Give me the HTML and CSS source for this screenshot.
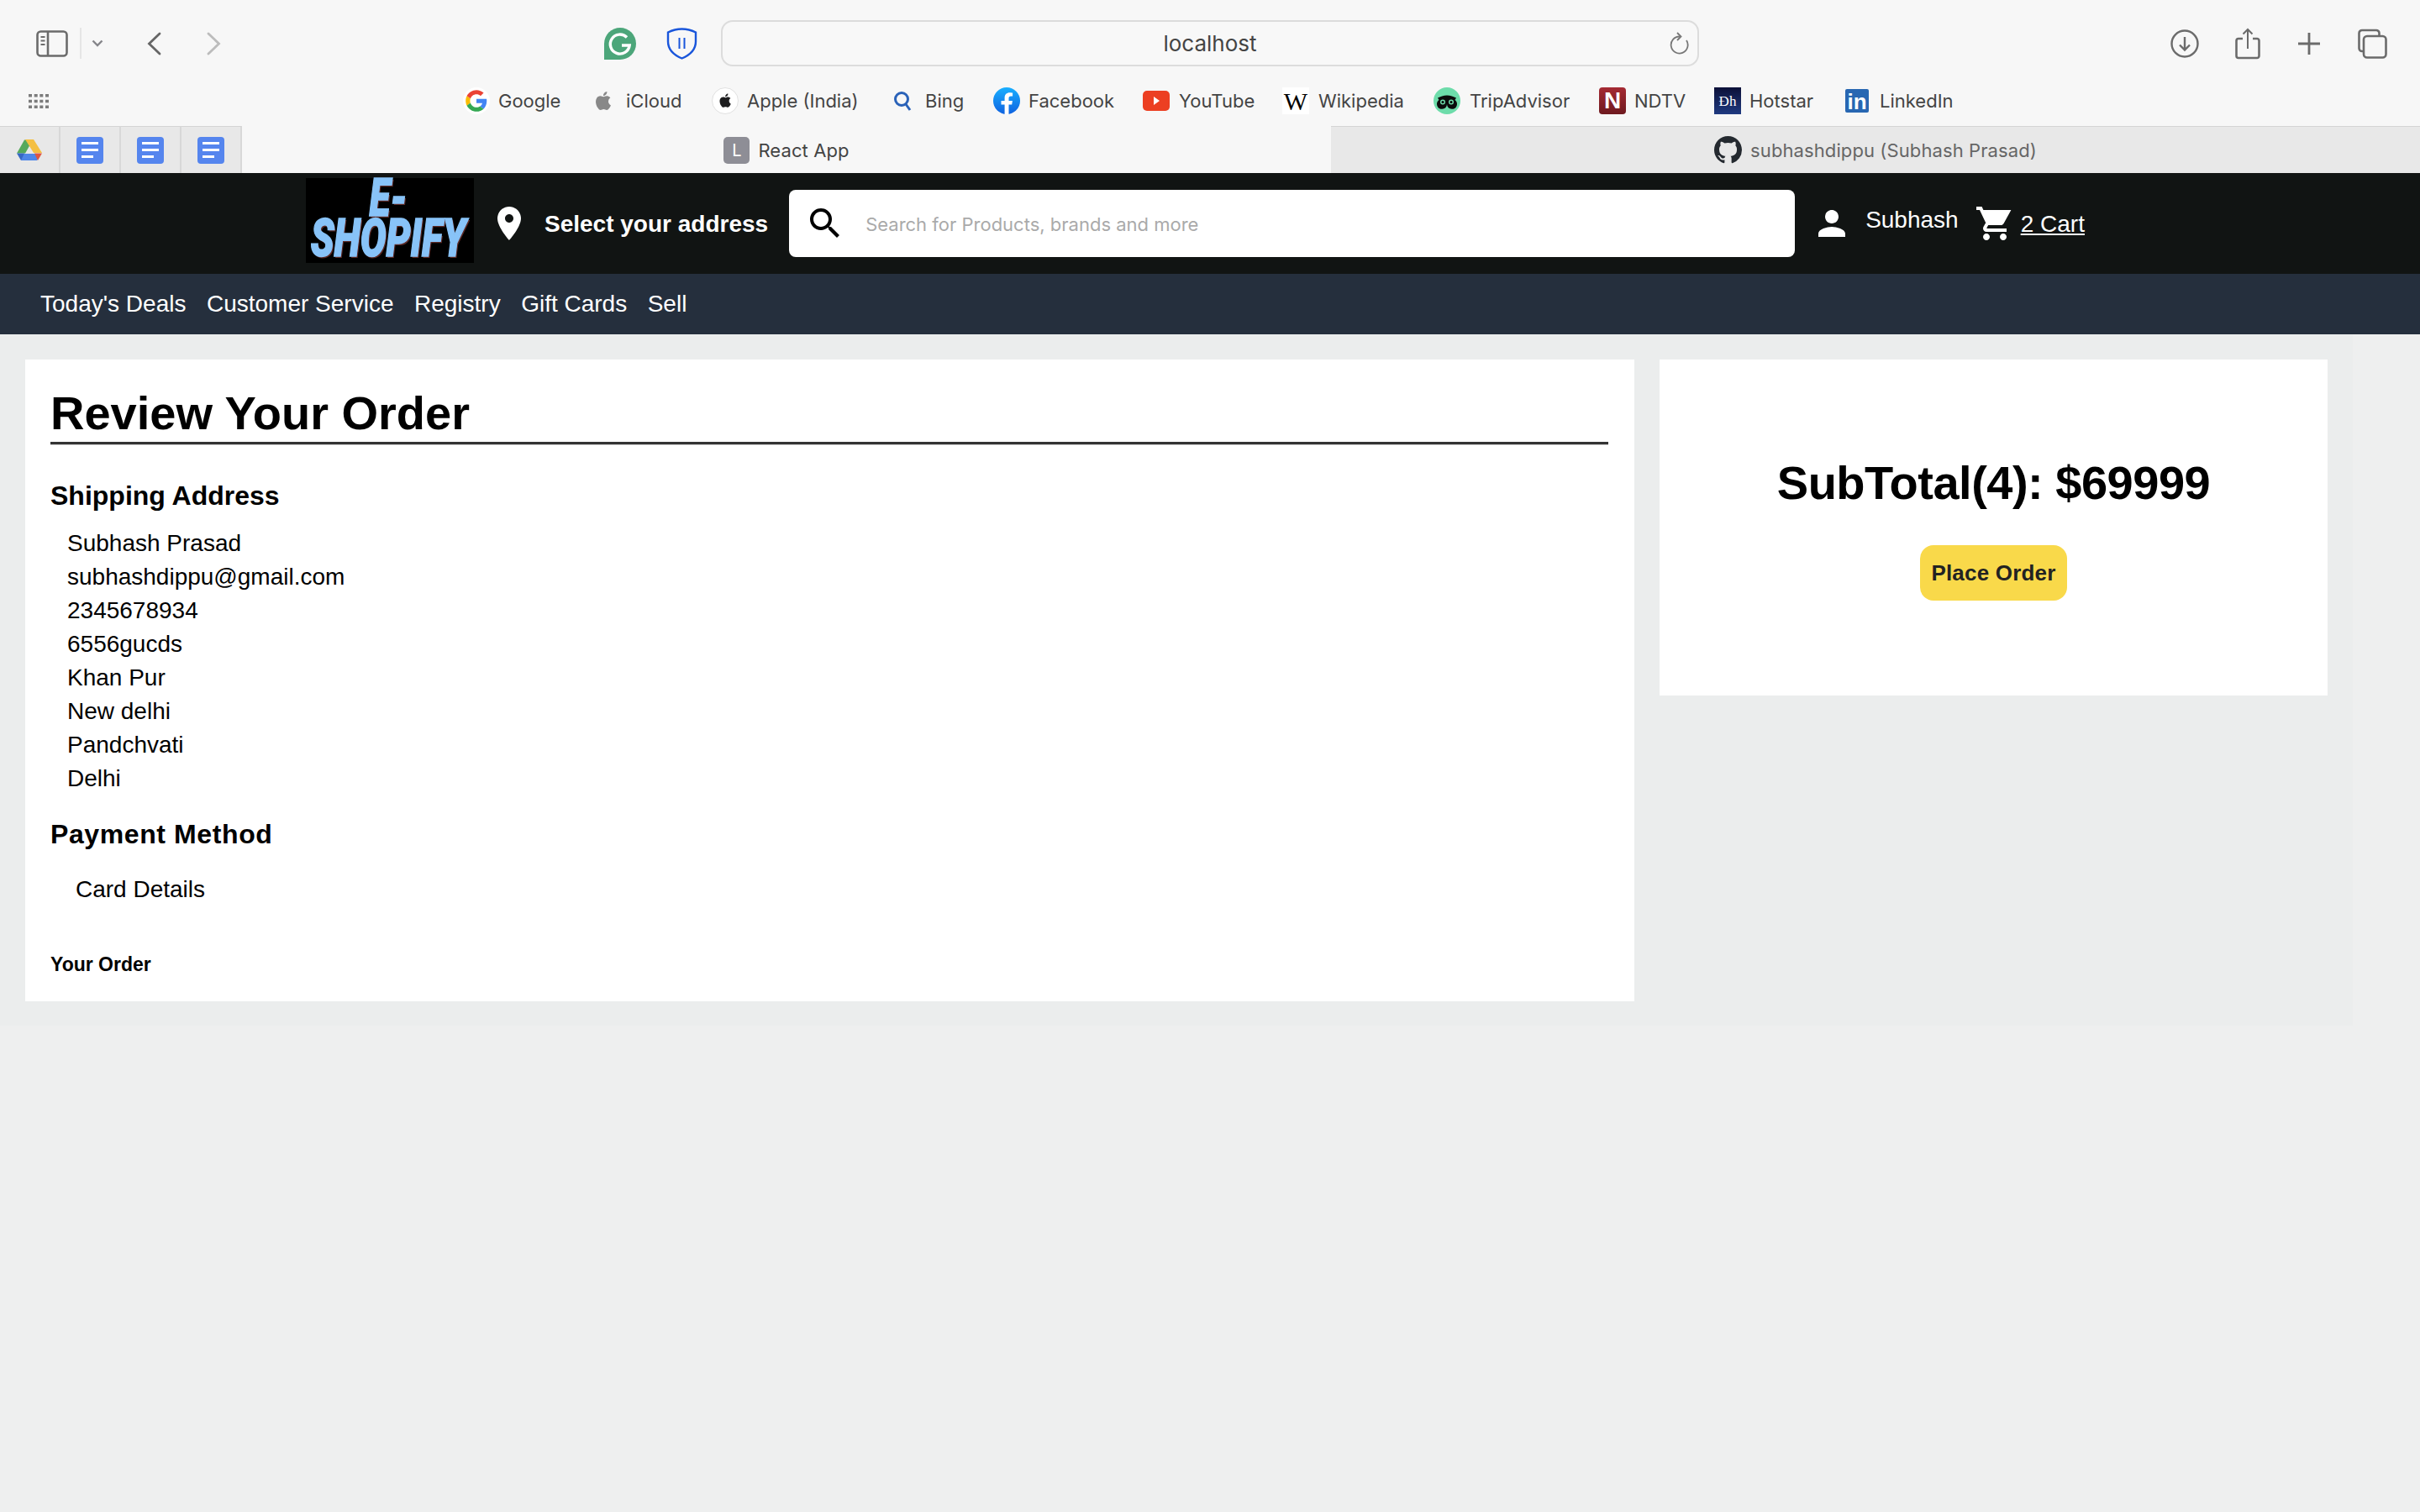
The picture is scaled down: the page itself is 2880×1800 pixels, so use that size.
FILE: index.html
```html
<!DOCTYPE html>
<html lang="en">
<head>
    <meta charset="UTF-8">
    <meta name="viewport" content="width=device-width, initial-scale=1.0">
    <title>React App</title>
    <link rel="stylesheet" href="styles.css">
</head>
<body>
    <div class="browser">
        <div class="toolbar">
            <svg class="tb-sidebar" width="38" height="32" viewBox="0 0 38 32" fill="none" stroke="#6b6b6b" stroke-width="2.6"><rect x="1.5" y="1.5" width="35" height="29" rx="4"/><path d="M14 2v28"/><path d="M5.5 8h5M5.5 12.5h5M5.5 17h5" stroke-width="1.8"/></svg>
            <span class="tb-divider"></span>
            <svg class="tb-chevron" width="14" height="9" viewBox="0 0 14 9" fill="none" stroke="#85858a" stroke-width="2.4"><path d="M1.5 1.5 7 7l5.5-5.5"/></svg>
            <svg class="tb-back" width="17" height="28" viewBox="0 0 17 28" fill="none" stroke="#666" stroke-width="2.8" stroke-linecap="round"><path d="M15 2 2.5 14 15 26"/></svg>
            <svg class="tb-forward" width="17" height="28" viewBox="0 0 17 28" fill="none" stroke="#bcbcbc" stroke-width="2.8" stroke-linecap="round"><path d="M2 2l12.5 12L2 26"/></svg>
            <svg class="tb-grammarly" width="38" height="38" viewBox="0 0 38 38"><path d="M0 19a19 19 0 1 1 19 19H0z" fill="#4ca67a"/><path d="M27 11.5A11.5 11.5 0 1 0 30.2 21H21" fill="none" stroke="#fff" stroke-width="3.4"/></svg>
            <svg class="tb-shield" width="37" height="38" viewBox="0 0 37 38" fill="none" stroke="#1a56db"><path d="M18.5 1.500c6 0 11.500 1.500 16.500 4v11c0 9-7 16-16.500 20C9 32.500 2 25.500 2 16.500v-11c5-2.500 10.500-4 16.500-4z" stroke-width="2.4"/><path d="M15.500 12v13M21.500 12v13" stroke-width="2"/></svg>
            <div class="address-bar">
                <span class="address-text">localhost</span>
                <svg class="reload-icon" width="24" height="28" viewBox="0 0 24 28" fill="none" stroke="#777" stroke-width="1.8"><path d="M13 5.500A10 10 0 1 0 21 10"/><path d="M10 1l4.500 4.500L10 10"/></svg>
            </div>
            <svg class="tb-download" width="34" height="34" viewBox="0 0 34 34" fill="none" stroke="#6b6b6b" stroke-width="2.4"><circle cx="17" cy="17" r="15.500"/><path d="M17 9v15M11 18.500l6 6 6-6"/></svg>
            <svg class="tb-share" width="30" height="38" viewBox="0 0 30 38" fill="none" stroke="#6b6b6b" stroke-width="2.6"><path d="M9 13H4a2.500 2.500 0 0 0-2.500 2.500v18A2.500 2.500 0 0 0 4 36h22a2.500 2.500 0 0 0 2.500-2.500v-18A2.500 2.500 0 0 0 26 13h-5"/><path d="M15 25V2M9.500 7.500 15 2l5.500 5.500" stroke-width="2"/></svg>
            <svg class="tb-plus" width="28" height="28" viewBox="0 0 28 28" fill="none" stroke="#6b6b6b" stroke-width="2.8"><path d="M14 1v26M1 14h26"/></svg>
            <svg class="tb-tabs" width="35" height="36" viewBox="0 0 35 36" fill="none" stroke="#6b6b6b" stroke-width="2.6"><path d="M6 27H5a3.500 3.500 0 0 1-3.500-3.500v-18A3.500 3.500 0 0 1 5 2h17a3.500 3.500 0 0 1 3.500 3.500V8"/><rect x="7" y="9" width="26.500" height="25.500" rx="4"/></svg>
        </div>

        <div class="bookmarks">
            <svg class="grid-icon" width="24" height="17" viewBox="0 0 24 17" fill="#7c7c7c"><path d="M0 0h4v3.400H0zM6.700 0h4v3.400h-4zM13.300 0h4v3.400h-4zM20 0h4v3.400h-4zM0 6.800h4v3.400H0zM6.700 6.800h4v3.400h-4zM13.300 6.800h4v3.400h-4zM20 6.800h4v3.400h-4zM0 13.600h4V17H0zM6.700 13.600h4V17h-4zM13.300 13.600h4V17h-4zM20 13.600h4V17h-4z"/></svg>
            <div class="bookmark-list">
                <a class="bookmark">
                    <svg class="favicon" viewBox="-6 -6 60 60"><circle cx="24" cy="24" r="30" fill="#fff"/><path fill="#EA4335" d="M24 9.500c3.540 0 6.710 1.220 9.210 3.600l6.850-6.850C35.900 2.380 30.470 0 24 0 14.620 0 6.510 5.380 2.560 13.220l7.980 6.190C12.430 13.720 17.740 9.500 24 9.500z"/><path fill="#4285F4" d="M46.980 24.550c0-1.570-.15-3.090-.38-4.550H24v9.020h12.940c-.58 2.960-2.260 5.480-4.780 7.180l7.730 6c4.510-4.180 7.090-10.360 7.090-17.650z"/><path fill="#FBBC05" d="M10.530 28.590c-.48-1.450-.76-2.990-.76-4.590s.27-3.140.76-4.590l-7.980-6.190C.92 16.460 0 20.120 0 24c0 3.880.92 7.540 2.560 10.780l7.970-6.190z"/><path fill="#34A853" d="M24 48c6.480 0 11.930-2.130 15.890-5.810l-7.730-6c-2.150 1.450-4.920 2.300-8.160 2.300-6.260 0-11.570-4.220-13.470-9.910l-7.980 6.190C6.510 42.620 14.620 48 24 48z"/></svg>
                    Google
                </a>
                <a class="bookmark">
                    <svg class="favicon favicon-narrow" viewBox="0 0 24 24" fill="#888"><path d="M12.152 6.896c-.948 0-2.415-1.078-3.960-1.040-2.040.027-3.910 1.183-4.961 3.014-2.117 3.675-.546 9.103 1.519 12.090 1.013 1.454 2.208 3.090 3.792 3.039 1.520-.065 2.090-.987 3.935-.987 1.831 0 2.350.987 3.960.948 1.637-.026 2.676-1.480 3.676-2.948 1.156-1.688 1.636-3.325 1.662-3.415-.039-.013-3.182-1.221-3.220-4.857-.026-3.040 2.480-4.494 2.597-4.559-1.429-2.090-3.623-2.324-4.390-2.376-2-.156-3.675 1.090-4.610 1.090zM15.530 3.830c.843-1.012 1.400-2.427 1.245-3.830-1.207.052-2.662.805-3.532 1.818-.780.896-1.454 2.338-1.273 3.714 1.338.104 2.715-.688 3.559-1.701"/></svg>
                    iCloud
                </a>
                <a class="bookmark">
                    <svg class="favicon" viewBox="0 0 32 32"><circle cx="16" cy="16" r="15.500" fill="#fff" stroke="#e0e0e0"/><g transform="translate(8 7.500) scale(.68)" fill="#1d1d1f"><path d="M12.152 6.896c-.948 0-2.415-1.078-3.960-1.040-2.040.027-3.910 1.183-4.961 3.014-2.117 3.675-.546 9.103 1.519 12.090 1.013 1.454 2.208 3.090 3.792 3.039 1.520-.065 2.090-.987 3.935-.987 1.831 0 2.350.987 3.960.948 1.637-.026 2.676-1.480 3.676-2.948 1.156-1.688 1.636-3.325 1.662-3.415-.039-.013-3.182-1.221-3.220-4.857-.026-3.040 2.480-4.494 2.597-4.559-1.429-2.090-3.623-2.324-4.390-2.376-2-.156-3.675 1.090-4.610 1.090zM15.530 3.830c.843-1.012 1.400-2.427 1.245-3.830-1.207.052-2.662.805-3.532 1.818-.780.896-1.454 2.338-1.273 3.714 1.338.104 2.715-.688 3.559-1.701"/></g></svg>
                    Apple (India)
                </a>
                <a class="bookmark">
                    <svg class="favicon favicon-narrow" viewBox="0 0 22 24" fill="none" stroke="#2a62b8" stroke-width="3"><circle cx="10" cy="10" r="7.500"/><path d="M15 16l5 7"/></svg>
                    Bing
                </a>
                <a class="bookmark">
                    <svg class="favicon" viewBox="0 0 32 32"><defs><linearGradient id="fb" x1="0" y1="0" x2="0" y2="1"><stop offset="0" stop-color="#19afff"/><stop offset="1" stop-color="#0f62e0"/></linearGradient></defs><circle cx="16" cy="16" r="16" fill="url(#fb)"/><path d="M22.200 20.600l.7-4.600h-4.400v-3c0-1.300.6-2.500 2.600-2.500h2V6.600s-1.800-.3-3.500-.3c-3.600 0-6 2.200-6 6.200V16H9.500v4.600h4.100V32h4.900V20.600z" fill="#fff"/></svg>
                    Facebook
                </a>
                <a class="bookmark">
                    <svg class="favicon" viewBox="0 0 32 32"><rect y="4" width="32" height="24" rx="5" fill="#ec3f22"/><path d="M13 11l7 5-7 5z" fill="#fff"/></svg>
                    YouTube
                </a>
                <a class="bookmark">
                    <span class="favicon wiki-icon">W</span>
                    Wikipedia
                </a>
                <a class="bookmark">
                    <svg class="favicon" viewBox="0 0 32 32"><circle cx="16" cy="16" r="16" fill="#6ddcaa"/><path d="M5 12.500c3-1.500 7-3 11-3s8 1.500 11 3c-.5 1-1 1.500-1.500 2.500A6 6 0 1 1 16 20a6 6 0 1 1-9.500-5C6 14 5.500 13.500 5 12.500z" fill="#0b0b0b"/><circle cx="11" cy="17.500" r="3" fill="#6ddcaa"/><circle cx="21" cy="17.500" r="3" fill="#6ddcaa"/><circle cx="11" cy="17.500" r="1.500"/><circle cx="21" cy="17.500" r="1.500"/></svg>
                    TripAdvisor
                </a>
                <a class="bookmark">
                    <span class="favicon ndtv-icon">N</span>
                    NDTV
                </a>
                <a class="bookmark">
                    <span class="favicon hotstar-icon">Ðh</span>
                    Hotstar
                </a>
                <a class="bookmark">
                    <span class="favicon linkedin-icon">in</span>
                    LinkedIn
                </a>
            </div>
        </div>

        <div class="tabbar">
            <div class="pinned-tab">
                <svg width="30" height="27" viewBox="0 0 30 27"><path d="M10 1h10L11 17H1z" fill="#55a95c" transform="translate(-1 .5)"/><path d="M10 1h10l10 16H20z" fill="#f4bf42"/><path d="M6 18h23l-5 8H5z" fill="#4f86e8"/><path d="M0 17.500h9L5 26z" fill="#3768c4"/><path d="M21 17.500h9L25 26z" fill="#df5640"/></svg>
            </div>
            <div class="pinned-tab"><span class="docs-icon"><i></i><i></i><i class="short"></i></span></div>
            <div class="pinned-tab"><span class="docs-icon"><i></i><i></i><i class="short"></i></span></div>
            <div class="pinned-tab"><span class="docs-icon"><i></i><i></i><i class="short"></i></span></div>
            <div class="tab tab-active"><span class="letter-icon">L</span>React App</div>
            <div class="tab">
                <svg width="33" height="33" viewBox="0 0 16 16" fill="#24292f"><path d="M8 0C3.580 0 0 3.580 0 8c0 3.540 2.290 6.530 5.470 7.590.4.070.55-.17.55-.38 0-.19-.01-.82-.01-1.490-2.010.37-2.530-.49-2.690-.94-.09-.23-.48-.94-.82-1.130-.28-.15-.68-.52-.01-.53.63-.01 1.080.58 1.230.82.72 1.210 1.870.87 2.330.66.07-.52.28-.87.51-1.070-1.780-.2-3.640-.89-3.640-3.950 0-.87.31-1.590.82-2.150-.08-.2-.36-1.020.08-2.120 0 0 .67-.21 2.200.82.64-.18 1.320-.27 2-.27.68 0 1.360.09 2 .27 1.530-1.040 2.200-.82 2.200-.82.44 1.100.16 1.920.08 2.120.51.56.82 1.270.82 2.150 0 3.070-1.870 3.750-3.650 3.950.29.25.54.73.54 1.480 0 1.070-.01 1.930-.01 2.200 0 .21.15.46.55.38A8.013 8.013 0 0 0 16 8c0-4.420-3.580-8-8-8z"/></svg>
                subhashdippu (Subhash Prasad)
            </div>
        </div>
    </div>

    <header class="site-header">
        <div class="logo">
            <span class="logo-text">E- SHOPIFY</span>
        </div>
        <svg class="pin-icon" width="48" height="48" viewBox="0 0 24 24" fill="#fff"><path d="M12 2C8.130 2 5 5.130 5 9c0 5.250 7 13 7 13s7-7.750 7-13c0-3.870-3.130-7-7-7zm0 9.500c-1.380 0-2.500-1.120-2.500-2.500s1.120-2.500 2.500-2.500 2.500 1.120 2.500 2.500-1.120 2.500-2.500 2.500z"/></svg>
        <span class="select-address">Select your address</span>
        <div class="search-box">
            <svg width="48" height="48" viewBox="0 0 24 24" fill="#000"><path d="M15.500 14h-.79l-.28-.27C15.410 12.590 16 11.110 16 9.500 16 5.910 13.090 3 9.500 3S3 5.910 3 9.500 5.910 16 9.500 16c1.610 0 3.090-.59 4.230-1.570l.27.28v.79l5 4.990L20.490 19l-4.990-5zm-6 0C7.010 14 5 11.990 5 9.500S7.010 5 9.500 5 14 7.010 14 9.500 11.990 14 9.500 14z"/></svg>
            <input class="search-input" type="text" placeholder="Search for Products, brands and more">
        </div>
        <svg class="user-icon" width="48" height="48" viewBox="0 0 24 24" fill="#fff"><path d="M12 12c2.210 0 4-1.790 4-4s-1.790-4-4-4-4 1.790-4 4 1.790 4 4 4zm0 2c-2.670 0-8 1.340-8 4v2h16v-2c0-2.660-5.330-4-8-4z"/></svg>
        <span class="user-name">Subhash</span>
        <svg class="cart-icon" width="48" height="48" viewBox="0 0 24 24" fill="#fff"><path d="M7 18c-1.100 0-1.990.9-1.990 2S5.900 22 7 22s2-.9 2-2-.9-2-2-2zM1 2v2h2l3.600 7.590-1.350 2.450c-.16.28-.25.61-.25.96 0 1.100.9 2 2 2h12v-2H7.420c-.14 0-.25-.11-.25-.25l.03-.12.9-1.630h7.450c.75 0 1.410-.41 1.750-1.030L21.700 4H5.210l-.94-2H1zm16 16c-1.100 0-1.990.9-1.990 2s.89 2 1.990 2 2-.9 2-2-.9-2-2-2z"/></svg>
        <a class="cart-link">2 Cart</a>
    </header>

    <nav class="site-nav">
        <a>Today's Deals</a>
        <a>Customer Service</a>
        <a>Registry</a>
        <a>Gift Cards</a>
        <a>Sell</a>
    </nav>

    <main class="checkout">
        <section class="review-card">
            <h1 class="review-title">Review Your Order</h1>
            <hr class="review-rule">
            <h2 class="section-title shipping-title">Shipping Address</h2>
            <div class="address-lines">
                <p>Subhash Prasad</p>
                <p>subhashdippu@gmail.com</p>
                <p>2345678934</p>
                <p>6556gucds</p>
                <p>Khan Pur</p>
                <p>New delhi</p>
                <p>Pandchvati</p>
                <p>Delhi</p>
            </div>
            <h2 class="section-title payment-title">Payment Method</h2>
            <p class="card-details">Card Details</p>
            <h3 class="your-order">Your Order</h3>
        </section>
        <aside class="summary-card">
            <h2 class="subtotal">SubTotal(4): $69999</h2>
            <button class="place-order" type="button">Place Order</button>
        </aside>
    </main>
</body>
</html>
```
FILE: styles.css
```css
* {
    box-sizing: border-box;
}
body {
    margin: 0;
    background-color: #eeefef;
    font-family: 'Liberation Sans', Arial, sans-serif;
    color: #000;
}

/* browser chrome */
.browser {
    background: #f7f7f7;
    font-family: Inter, 'Noto Sans', sans-serif;
    font-size: 22px;
    color: #444;
}
.toolbar {
    display: flex;
    align-items: center;
    height: 88px;
    padding-top: 15px;
    padding-left: 43px;
}
.tb-divider {
    width: 2px;
    height: 37px;
    margin-left: 14px;
    background: #e6e6e6;
}
.tb-chevron { margin-left: 12px; }
.tb-back { margin-left: 52px; }
.tb-forward { margin-left: 54px; }
.tb-grammarly { margin-left: 456px; }
.tb-shield { margin-left: 36px; }
.tb-download { margin-left: 561px; }
.tb-share { margin-left: 43px; }
.tb-plus { margin-left: 44px; }
.tb-tabs { margin-left: 44px; }
.address-bar {
    display: flex;
    align-items: center;
    justify-content: center;
    position: relative;
    width: 1164px;
    height: 55px;
    margin-left: 28px;
    border: 2px solid #dcdcdc;
    border-radius: 14px;
    background: #f8f8f8;
}
.address-text {
    font-size: 26px;
    color: #444;
}
.reload-icon {
    position: absolute;
    right: 10px;
    top: 12px;
}
.bookmarks {
    display: flex;
    align-items: center;
    height: 62px;
    padding-top: 2px;
    padding-left: 34px;
}
.bookmark-list {
    display: flex;
    align-items: center;
    margin-left: 493px;
}
.bookmark {
    display: flex;
    align-items: center;
    gap: 11px;
    white-space: nowrap;
}
/* each bookmark starts where safari put it */
.bookmark:nth-child(1) { width: 156px; gap: 10px; }
.bookmark:nth-child(2) { width: 140px; gap: 16px; }
.bookmark:nth-child(3) { width: 216px; gap: 10px; }
.bookmark:nth-child(4) { width: 119px; gap: 16px; }
.bookmark:nth-child(5) { width: 178px; gap: 10px; }
.bookmark:nth-child(6) { width: 166px; }
.bookmark:nth-child(7) { width: 180px; }
.bookmark:nth-child(8) { width: 197px; }
.bookmark:nth-child(9) { width: 137px; gap: 10px; }
.bookmark:nth-child(10) { width: 156px; gap: 10px; }
.bookmark:nth-child(11) { gap: 13px; }
.favicon {
    display: block;
    flex: none;
    width: 32px;
    height: 32px;
}
.favicon-narrow {
    width: 22px;
    height: 26px;
}
.wiki-icon {
    background: #fff;
    color: #000;
    font-family: 'Liberation Serif', serif;
    font-size: 30px;
    line-height: 34px;
    text-align: center;
}
.ndtv-icon {
    border-radius: 4px;
    background: linear-gradient(#a52a33, #6e1a1f);
    color: #fff;
    font-family: 'Liberation Sans', sans-serif;
    font-weight: bold;
    font-size: 28px;
    line-height: 32px;
    text-align: center;
}
.hotstar-icon {
    background: linear-gradient(#0c1038, #1f3a80);
    color: #fff;
    font-family: 'Liberation Serif', serif;
    font-size: 17px;
    line-height: 34px;
    text-align: center;
}
.linkedin-icon {
    width: 28px;
    height: 28px;
    border-radius: 2px;
    background: #2867b2;
    color: #fff;
    font-family: 'Liberation Sans', sans-serif;
    font-weight: bold;
    font-size: 26px;
    line-height: 30px;
    text-align: center;
}
.tabbar {
    display: flex;
    height: 56px;
}
.pinned-tab {
    display: flex;
    align-items: center;
    justify-content: center;
    width: 72px;
    background: #e8e8e8;
    border-top: 1px solid #d4d4d4;
    border-right: 2px solid #d8d8d8;
}
.docs-icon {
    display: flex;
    flex-direction: column;
    gap: 5px;
    width: 32px;
    height: 32px;
    padding: 6px;
    border-radius: 4px;
    background: #5585ee;
}
.docs-icon i {
    display: block;
    height: 4px;
    background: #fff;
}
.docs-icon i.short {
    width: 14px;
}
.tab {
    display: flex;
    flex: 1;
    align-items: center;
    justify-content: center;
    gap: 10px;
    background: #e8e8e8;
    border-top: 1px solid #d4d4d4;
    color: #666;
    letter-spacing: .1px;
}
.tab-active {
    background: #f7f7f7;
    border-top-color: #f7f7f7;
    color: #444;
}
.letter-icon {
    width: 31px;
    height: 32px;
    border-radius: 5px;
    background: #8e8e96;
    color: #fff;
    font-size: 20px;
    line-height: 33px;
    text-align: center;
}

/* site header */
.site-header {
    display: flex;
    align-items: center;
    height: 120px;
    padding-left: 364px;
    background: #111413;
    color: #fff;
}
.logo {
    display: flex;
    justify-content: center;
    width: 200px;
    height: 101px;
    margin-bottom: 7px;
    background: #000;
}
.logo-text {
    flex: none;
    width: 280px;
    height: 96px;
    font-family: Roboto, sans-serif;
    font-style: italic;
    font-weight: 900;
    font-size: 62px;
    line-height: 48px;
    text-align: center;
    color: #88c3f8;
    -webkit-text-stroke: 1.5px #88c3f8;
    text-shadow: 2px 2px 0 #5d2a26;
    transform: translate(-2px, 0) scaleX(.74);
}
.pin-icon { margin-left: 18px; }
.select-address {
    margin-left: 18px;
    margin-top: 2px;
    font-weight: bold;
    font-size: 28px;
}
.search-box {
    display: flex;
    align-items: center;
    width: 1197px;
    height: 80px;
    margin-left: 25px;
    padding-left: 19px;
    border-radius: 8px;
    background: #fff;
}
.search-input {
    flex: 1;
    margin-left: 22px;
    margin-top: 2px;
    border: none;
    outline: none;
    background: transparent;
    font-family: Inter, sans-serif;
    font-size: 22px;
}
.search-input::placeholder {
    color: #aaa;
}
.user-icon { margin-left: 20px; }
.user-name {
    margin-left: 16px;
    margin-bottom: 8px;
    font-size: 28px;
}
.cart-icon { margin-left: 19px; }
.cart-link {
    margin-left: 7px;
    margin-top: 2px;
    font-size: 28px;
    text-decoration: underline;
}
.site-nav {
    display: flex;
    align-items: center;
    gap: 24.5px;
    height: 72px;
    padding-left: 48px;
    background: #252f3d;
    color: #fff;
    font-size: 28px;
}

/* checkout */
.checkout {
    display: flex;
    align-items: flex-start;
    gap: 30px;
    width: 2800px;
    padding: 30px 30px 29px;
    background: #ebeded;
}
.review-card {
    width: 1915px;
    padding: 32px 31px 29px 30px;
    background: #fff;
}
.review-title {
    margin: 0;
    font-size: 56px;
    line-height: 64px;
}
.review-rule {
    height: 4px;
    margin: 2px 0 0;
    border: none;
    border-top: 3px solid #333;
    border-bottom: 1px solid #ccc;
}
.section-title {
    margin: 0;
    font-size: 32px;
    line-height: 40px;
}
.shipping-title { margin-top: 40px; }
.payment-title {
    margin-top: 26px;
    letter-spacing: .6px;
}
.address-lines {
    margin-top: 17px;
    padding-left: 20px;
}
.address-lines p {
    margin: 0;
    font-size: 28px;
    line-height: 40px;
}
.card-details {
    margin: 26px 0 0;
    padding-left: 30px;
    font-size: 28px;
    line-height: 40px;
}
.your-order {
    margin: 54px 0 0;
    font-size: 23px;
    line-height: 30px;
}
.summary-card {
    display: flex;
    flex-direction: column;
    align-items: center;
    width: 795px;
    height: 400px;
    padding-top: 115px;
    background: #fff;
}
.subtotal {
    margin: 0;
    font-size: 56px;
    line-height: 64px;
    letter-spacing: -.5px;
}
.place-order {
    width: 175px;
    height: 66px;
    margin-top: 42px;
    border: none;
    border-radius: 16px;
    background: #f9d94a;
    color: #222;
    font-family: 'Liberation Sans', sans-serif;
    font-weight: bold;
    font-size: 26px;
    letter-spacing: .2px;
    cursor: pointer;
}
```
